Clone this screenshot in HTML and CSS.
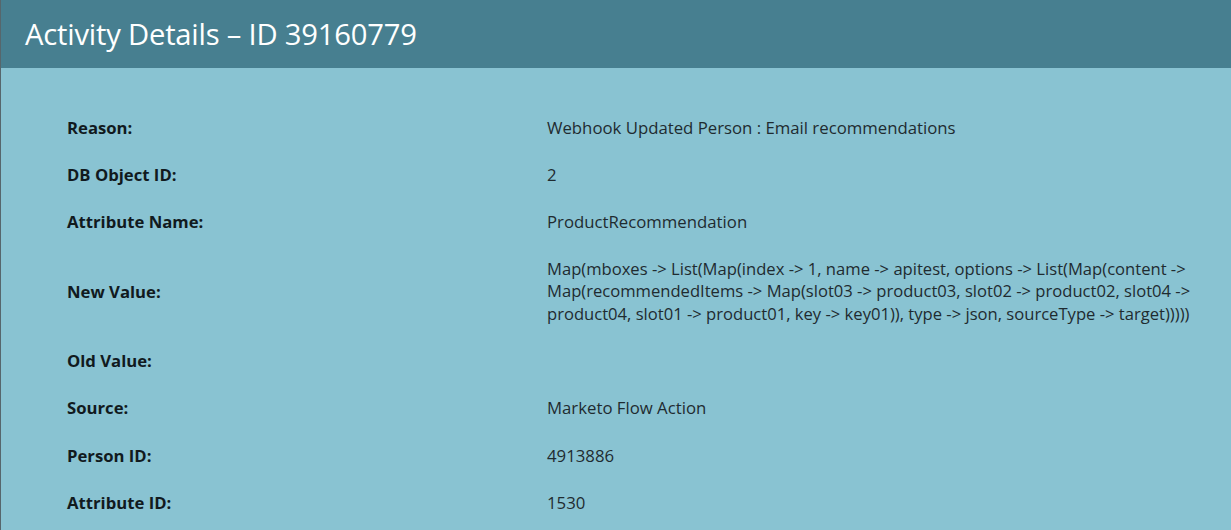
FILE: index.html
```html
<!DOCTYPE html>
<html>
<head>
<meta charset="utf-8">
<link rel="stylesheet" href="styles.css">
</head>
<body>
<div class="page">
  <header class="header"><h1 class="title">Activity Details – ID 39160779</h1></header>
  <div class="details">
    <div class="row"><div class="label">Reason:</div><div class="value">Webhook Updated Person : Email recommendations</div></div>
    <div class="row"><div class="label">DB Object ID:</div><div class="value">2</div></div>
    <div class="row"><div class="label">Attribute Name:</div><div class="value">ProductRecommendation</div></div>
    <div class="row"><div class="label">New Value:</div><div class="value narrow">Map(mboxes -&gt; List(Map(index -&gt; 1, name -&gt; apitest, options -&gt; List(Map(content -&gt; Map(recommendedItems -&gt; Map(slot03 -&gt; product03, slot02 -&gt; product02, slot04 -&gt; product04, slot01 -&gt; product01, key -&gt; key01)), type -&gt; json, sourceType -&gt; target)))))</div></div>
    <div class="row"><div class="label">Old Value:</div><div class="value"></div></div>
    <div class="row"><div class="label">Source:</div><div class="value">Marketo Flow Action</div></div>
    <div class="row"><div class="label">Person ID:</div><div class="value">4913886</div></div>
    <div class="row"><div class="label">Attribute ID:</div><div class="value">1530</div></div>
  </div>
</div>
</body>
</html>
```
FILE: styles.css
```css
html, body {
  margin: 0;
  padding: 0;
  height: 100%;
}
body {
  background: #89c3d2;
  font-family: "Open Sans", "Noto Sans", sans-serif;
  overflow: hidden;
}
.page {
  min-height: 100%;
  border-left: 1px solid #56666c;
}
.header {
  background: #477f90;
  height: 68px;
  display: flex;
  align-items: center;
  padding-left: 24px;
}
.title {
  margin: 0;
  color: #ffffff;
  font-weight: 400;
  font-size: 29.2px;
  letter-spacing: -0.2px;
}
.details {
  padding: 36px 30px 0 66px;
}
.row {
  display: grid;
  grid-template-columns: 480px 1fr;
  align-items: center;
  padding: 12.6px 0;
  min-height: 22px;
}
.label {
  font-weight: 700;
  font-size: 16.7px;
  color: #111a1e;
  line-height: 22px;
}
.value {
  font-size: 16.75px;
  color: #1f2b30;
  line-height: 22px;
}
.value.narrow {
  font-size: 16.6px;
  line-height: 22.3px;
  max-width: 660px;
}
```
